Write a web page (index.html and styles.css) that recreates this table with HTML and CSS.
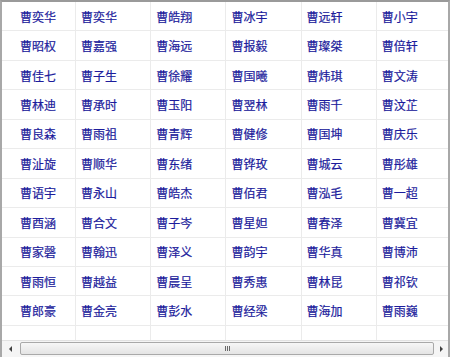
FILE: index.html
```html
<!DOCTYPE html>
<html>
<head>
<meta charset="utf-8">
<link rel="stylesheet" href="styles.css">
</head>
<body>
<div class="frame">
  <div class="viewport">
    <div class="grid">
      <div class="cell first">曹奕华</div><div class="cell">曹奕华</div><div class="cell">曹皓翔</div><div class="cell">曹冰宇</div><div class="cell">曹远轩</div><div class="cell">曹小宇</div>
      <div class="cell first">曹昭权</div><div class="cell">曹嘉强</div><div class="cell">曹海远</div><div class="cell">曹报毅</div><div class="cell">曹璨桀</div><div class="cell">曹倍轩</div>
      <div class="cell first">曹佳七</div><div class="cell">曹子生</div><div class="cell">曹徐耀</div><div class="cell">曹国曦</div><div class="cell">曹炜琪</div><div class="cell">曹文涛</div>
      <div class="cell first">曹林迪</div><div class="cell">曹承时</div><div class="cell">曹玉阳</div><div class="cell">曹翌林</div><div class="cell">曹雨千</div><div class="cell">曹汶芷</div>
      <div class="cell first">曹良森</div><div class="cell">曹雨祖</div><div class="cell">曹青辉</div><div class="cell">曹健修</div><div class="cell">曹国坤</div><div class="cell">曹庆乐</div>
      <div class="cell first">曹沚旋</div><div class="cell">曹顺华</div><div class="cell">曹东绪</div><div class="cell">曹铧玫</div><div class="cell">曹城云</div><div class="cell">曹彤雄</div>
      <div class="cell first">曹语宇</div><div class="cell">曹永山</div><div class="cell">曹皓杰</div><div class="cell">曹佰君</div><div class="cell">曹泓毛</div><div class="cell">曹一超</div>
      <div class="cell first">曹酉涵</div><div class="cell">曹合文</div><div class="cell">曹子岑</div><div class="cell">曹星妲</div><div class="cell">曹春泽</div><div class="cell">曹冀宜</div>
      <div class="cell first">曹家磬</div><div class="cell">曹翰迅</div><div class="cell">曹泽义</div><div class="cell">曹韵宇</div><div class="cell">曹华真</div><div class="cell">曹博沛</div>
      <div class="cell first">曹雨恒</div><div class="cell">曹越益</div><div class="cell">曹晨呈</div><div class="cell">曹秀惠</div><div class="cell">曹林昆</div><div class="cell">曹祁钦</div>
      <div class="cell first">曹郎豪</div><div class="cell">曹金亮</div><div class="cell">曹彭水</div><div class="cell">曹经梁</div><div class="cell">曹海加</div><div class="cell">曹雨巍</div>
      <div class="cell first"></div><div class="cell"></div><div class="cell"></div><div class="cell"></div><div class="cell"></div><div class="cell"></div>
    </div>
  </div>
  <div class="hscroll">
    <div class="btn"><span class="arrow left"></span></div>
    <div class="track">
      <div class="thumb"><span class="grip"><i></i><i></i><i></i></span></div>
    </div>
    <div class="btn"><span class="arrow right"></span></div>
  </div>
</div>
</body>
</html>
```

FILE: styles.css
```css
html, body {
  margin: 0;
  padding: 0;
  background: #ffffff;
}
.frame {
  width: 450px;
  height: 357px;
  box-sizing: border-box;
  border-top: 2px solid #9a9a9a;
  border-left: 2px solid #a8a8a8;
  border-right: 2px solid #a8a8a8;
  display: flex;
  flex-direction: column;
  overflow: hidden;
}
.viewport {
  height: 338px;
  overflow: hidden;
  background: #fff;
}
.grid {
  display: grid;
  grid-template-columns: 74px repeat(5, 75.2px);
  grid-auto-rows: 29.45px;
  width: 452px;
}
.cell {
  box-sizing: border-box;
  border-right: 1px solid #ebebeb;
  border-bottom: 1px solid #ebebeb;
  padding-left: 5px;
  display: flex;
  align-items: center;
  font-family: "Noto Sans CJK SC", sans-serif;
  font-size: 12px;
  color: #1c1c9c;
  -webkit-text-stroke: 0.2px #1c1c9c;
  white-space: nowrap;
}
.cell.first {
  padding-left: 18px;
}
.hscroll {
  height: 17px;
  display: flex;
  background: #f5f5f5;
  border-top: 1px solid #e2e2e2;
  box-sizing: border-box;
}
.btn {
  width: 17px;
  flex: 0 0 17px;
  display: flex;
  align-items: center;
  justify-content: center;
}
.btn:last-child {
  flex-basis: 14px;
}
.arrow {
  width: 0;
  height: 0;
  border-top: 3px solid transparent;
  border-bottom: 3px solid transparent;
}
.arrow.left {
  border-right: 3px solid #404040;
}
.arrow.right {
  border-left: 3px solid #404040;
}
.track {
  flex: 1;
  display: flex;
  padding: 1px 0 2px 0;
}
.thumb {
  flex: 1;
  margin: 0 0 0 1px;
  border: 1px solid #a9a9a9;
  border-radius: 2px;
  background: linear-gradient(#f7f7f7, #e4e4e4);
  display: flex;
  align-items: center;
  justify-content: center;
}
.grip {
  display: flex;
  gap: 1px;
}
.grip i {
  display: block;
  width: 1px;
  height: 5px;
  background: #6a6a6a;
}
```
